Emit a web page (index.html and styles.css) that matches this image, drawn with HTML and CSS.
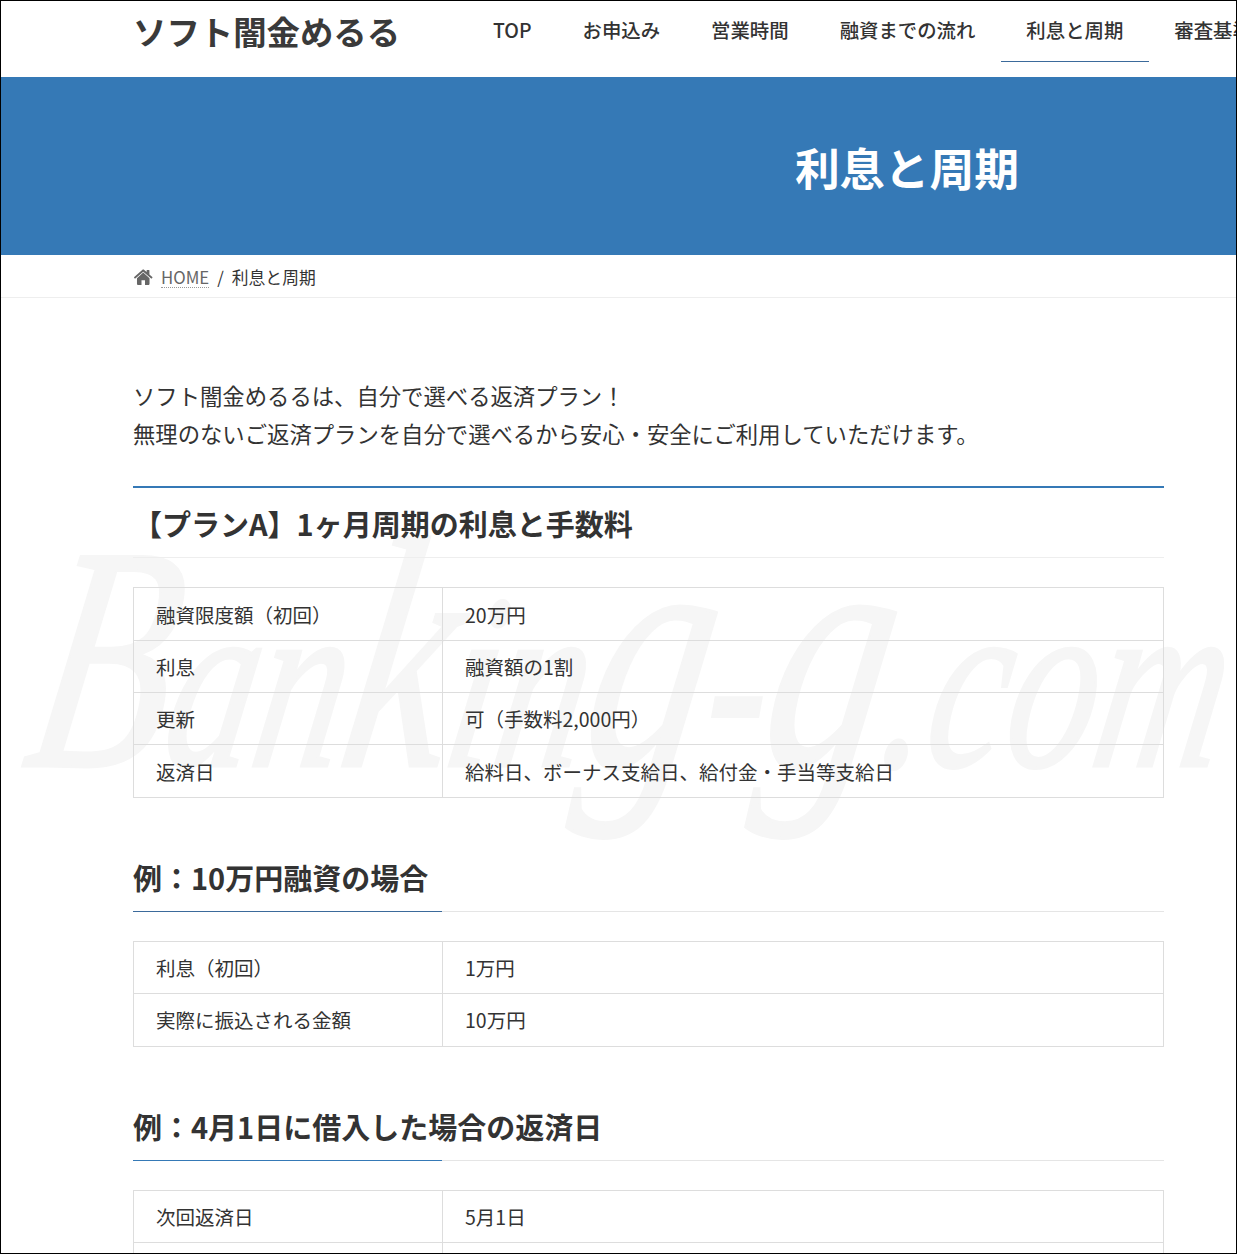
FILE: index.html
```html
<!DOCTYPE html>
<html lang="ja">
<head>
<meta charset="utf-8">
<title>利息と周期 | ソフト闇金めるる</title>
<link rel="stylesheet" href="styles.css">
</head>
<body>
<div class="frame">
  <svg class="watermark" viewBox="0 0 1235 400" aria-hidden="true">
    <text class="watermark-text" x="60" y="232" textLength="1195" lengthAdjust="spacingAndGlyphs" transform="skewX(-10)"><tspan class="wm-cap">B</tspan>an<tspan class="wm-tall">k</tspan>in<tspan class="wm-loop">g</tspan>-<tspan class="wm-loop">g</tspan>.com</text>
  </svg>
  <header class="site-header">
    <div class="logo">ソフト闇金めるる</div>
    <nav class="nav">
      <a class="nav-item">TOP</a>
      <a class="nav-item">お申込み</a>
      <a class="nav-item">営業時間</a>
      <a class="nav-item">融資までの流れ</a>
      <a class="nav-item nav-item-active">利息と周期</a>
      <a class="nav-item">審査基準</a>
    </nav>
  </header>
  <section class="hero">
    <h1 class="hero-title">利息と周期</h1>
  </section>
  <div class="breadcrumb">
    <svg class="home-icon" viewBox="0 0 18 14.200" preserveAspectRatio="none" aria-hidden="true">
      <path d="M9 3.2 2.900 8.300V13.400c0 .4.300.7.700.7h3.700V10h3.400v4.100h3.700c.4 0 .7-.3.7-.7V8.300z"/>
      <path d="M17.800 7.100 15 4.800V1.200c0-.2-.2-.4-.4-.4h-1.900c-.2 0-.4.2-.4.4v1.400L10 .8C9.400.3 8.600.3 8 .8L.2 7.100c-.2.2-.2.4-.1.600l.6.7c.1.1.2.1.3.100s.2 0 .3-.1L9 2.400l7.700 6c.1.100.2.100.3.100s.2 0 .3-.1l.6-.7c.1-.2.1-.4-.1-.6z"/>
    </svg>
    <a class="crumb-link">HOME</a>
    <span class="crumb-sep">/</span>
    <span class="crumb-current">利息と周期</span>
  </div>
  <main class="content">
    <p class="intro">ソフト闇金めるるは、自分で選べる返済プラン！<br>無理のないご返済プランを自分で選べるから安心・安全にご利用していただけます。</p>
    <h2 class="plan-title">【プランA】1ヶ月周期の利息と手数料</h2>
    <table class="info-table">
      <tr class="row-tall"><th>融資限度額（初回）</th><td>20万円</td></tr>
      <tr><th>利息</th><td>融資額の1割</td></tr>
      <tr><th>更新</th><td>可（手数料2,000円）</td></tr>
      <tr class="row-tall"><th>返済日</th><td>給料日、ボーナス支給日、給付金・手当等支給日</td></tr>
    </table>
    <h3 class="example-title">例：10万円融資の場合</h3>
    <table class="info-table">
      <tr><th>利息（初回）</th><td>1万円</td></tr>
      <tr class="row-end"><th>実際に振込される金額</th><td>10万円</td></tr>
    </table>
    <h3 class="example-title example-title-bright">例：4月1日に借入した場合の返済日</h3>
    <table class="info-table">
      <tr><th>次回返済日</th><td>5月1日</td></tr>
      <tr><th>次々回返済日</th><td>6月1日</td></tr>
    </table>
  </main>
</div>
</body>
</html>
```
FILE: styles.css
```css
* { box-sizing: border-box; }
html, body { margin: 0; padding: 0; }
body {
  font-family: "Noto Sans CJK JP", "Noto Sans", sans-serif;
  color: #333;
  background: #fff;
}
.frame {
  position: relative;
  width: 1237px;
  height: 1254px;
  border: 1px solid #000;
  overflow: hidden;
  background: #fff;
}
.watermark {
  position: absolute;
  left: 0;
  top: 533px;
  width: 1235px;
  height: 400px;
}
.watermark-text {
  font-family: "Liberation Serif", serif;
  font-style: italic;
  font-size: 250px;
  fill: #f6f6f6;
  stroke: #f6f6f6;
  stroke-width: 3px;
}
.wm-cap { font-size: 320px; }
.wm-tall { font-size: 330px; }
.wm-loop { font-size: 340px; }
.site-header {
  position: relative;
  display: flex;
  align-items: flex-start;
  height: 76px;
  padding-left: 132px;
  white-space: nowrap;
}
.logo {
  width: 334.500px;
  flex: none;
  font-size: 33.400px;
  font-weight: 700;
  line-height: 60px;
  color: #3a3a3a;
}
.nav { display: flex; flex: none; }
.nav-item {
  display: block;
  height: 61px;
  padding: 0 25.500px;
  font-size: 19.400px;
  font-weight: 500;
  line-height: 58px;
  color: #333;
}
.nav-item-active { border-bottom: 1px solid #3b6a9b; }
.hero {
  position: relative;
  height: 178px;
  padding: 0 0 0 794px;
  background: #3579b6;
}
.hero-title {
  margin: 0;
  font-size: 44.800px;
  font-weight: 700;
  line-height: 180px;
  color: #fff;
  white-space: nowrap;
}
.breadcrumb {
  position: relative;
  display: flex;
  align-items: center;
  height: 43px;
  padding-top: 2px;
  padding-left: 133px;
  border-bottom: 1px solid #eee;
  font-size: 16.800px;
}
.home-icon { width: 18.500px; height: 16px; fill: #666; flex: none; margin-right: 8.500px; }
.crumb-link {
  color: #666;
  border-bottom: 1px dotted #999;
  line-height: 20px;
}
.crumb-sep { margin: 0 8px; }
.content {
  position: relative;
  width: 1031px;
  margin-left: 132px;
  padding-top: 79px;
}
.intro {
  margin: 0 0 34px;
  font-size: 22.350px;
  line-height: 37.500px;
}
.plan-title {
  margin: 0 0 29px;
  height: 72px;
  border-top: 2px solid #3579b6;
  border-bottom: 1px solid #eee;
  font-size: 29px;
  font-weight: 700;
  line-height: 71px;
  white-space: nowrap;
}
.info-table {
  width: 100%;
  border-collapse: collapse;
  table-layout: fixed;
  font-size: 19.500px;
}
.info-table th, .info-table td {
  height: 52px;
  padding: 1px 22px 0;
  border: 1px solid #ddd;
  text-align: left;
  font-weight: 400;
  line-height: 1.500;
}
.info-table .row-tall th, .info-table .row-tall td { height: 53px; padding-top: 2px; }
.info-table .row-end th, .info-table .row-end td { height: 53px; padding-top: 0; }
.info-table th { width: 30%; }
.example-title {
  position: relative;
  margin: 48px 0 29px;
  height: 66px;
  border-bottom: 1px solid #e5e5e5;
  font-size: 29px;
  font-weight: 700;
  line-height: 63px;
  white-space: nowrap;
}
.example-title::after {
  content: "";
  position: absolute;
  left: 0;
  bottom: -1px;
  width: 30%;
  height: 1px;
  background: #3b6a9b;
}
.example-title-bright::after { background: #3579b6; }
```
